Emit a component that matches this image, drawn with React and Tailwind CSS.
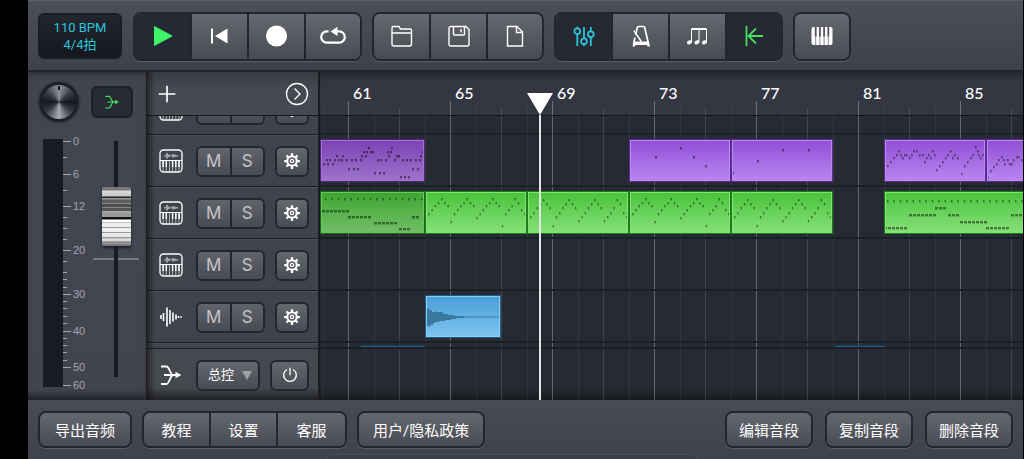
import { useState } from 'react'

const FIRST_BAR = 61
const FIRST_BAR_X = 28
const FOUR_BARS = 102

const barX = (bar) => Math.round(FIRST_BAR_X + ((bar - FIRST_BAR) * FOUR_BARS) / 4)

const bars = Array.from({ length: 28 }, (_, i) => 60 + i)
const labelledBars = [61, 65, 69, 73, 77, 81, 85]

// notes are [x, y, width] inside a clip
const row = (y, xs, w = 2) => xs.map((x) => [x, y, w])
const run = (y, from, to) => {
  const out = []
  for (let x = from; x < to - 1; x += 4) out.push([x, y, 3])
  return out
}
const steps = (ys) => ys.map((y, i) => [i * 3.2, y, 1.4])
const pulse = (y, count) => Array.from({ length: count }, (_, i) => [3 + i * 6.4, y, 1.4])
const shift = (notes, by) => notes.map(([x, y, w]) => [x + by, y, w])

const arpA = steps([38, 23, 19, 15, 12, 8, 12, 15, 31, 23, 19, 15, 12, 8, 12, 15, 27, 23, 19, 15, 12, 8, 12, 15, 35, 23, 19, 15, 8, 12, 19, 23])
const arpB = steps([38, 26, 22, 17, 13, 9, 13, 17, 35, 26, 22, 17, 13, 9, 13, 17, 30, 26, 22, 17, 13, 9, 13, 17, 30, 26, 22, 17, 9, 13, 22, 26])

const bassA = [
  ...pulse(8, 16),
  ...run(20, 0, 26),
  ...run(26, 26, 51),
  ...run(32, 52, 77),
  ...run(38, 77, 90),
  ...run(26, 90, 99),
  [101, 14, 1.4],
]
const bassB = [
  ...pulse(10, 22),
  ...run(37, 0, 25),
  ...run(24, 25, 51),
  ...run(17, 51, 63),
  ...run(24, 64, 76),
  ...run(31, 76, 102),
  ...run(37, 102, 127),
  ...run(24, 127, 140),
]
const melodyA = [
  ...row(21, [4, 7, 12, 16, 19, 24, 29, 33, 38, 55, 58, 63, 72, 80, 84, 88, 93, 97]),
  ...row(25, [1, 5, 10]),
  ...row(17, [14, 20, 39, 43, 66, 74, 76, 98]),
  ...row(13, [41, 44, 48, 50, 65, 68, 100]),
  ...row(9, [46, 69, 101]),
  ...row(30, [26, 31, 35, 90, 95]),
  ...row(34, [52, 57, 61]),
  ...row(38, [78, 82, 86]),
]
const dotsA = [[0, 35, 2], [26, 18, 2], [51, 9, 2], [64, 18, 2], [76, 27, 2]]
const dotsB = [[1, 34, 2], [26, 22, 2], [51, 11, 2], [77, 11, 2]]
const climb = [
  [0, 38], [3, 27], [6, 23], [9, 19], [12, 16], [14, 12], [16, 16], [18, 19], [20, 16], [22, 16], [25, 19],
  [27, 16], [29, 12], [32, 12], [35, 16], [38, 16], [40, 23], [42, 19], [44, 16], [46, 19], [48, 12], [50, 16],
  [52, 31], [55, 27], [58, 23], [61, 19], [63, 16], [66, 12], [68, 19], [70, 16], [73, 19], [77, 35], [80, 27],
  [83, 23], [86, 19], [88, 16], [91, 8], [93, 12], [94, 16], [96, 19], [98, 16], [100, 12],
].map(([x, y]) => [x, y, 1.6])
const climbLow = [
  [1, 39], [4, 32], [7, 28], [10, 25], [12, 21], [15, 18], [17, 21], [18, 25], [21, 21], [23, 25], [25, 25],
  [27, 21], [30, 18], [32, 18], [35, 21], [37, 25],
].map(([x, y]) => [x, y, 1.6])

const tracks = [
  {
    id: 'keys-1',
    icon: 'synth',
    color: 'purple',
    clips: [
      { from: 59.9, to: 64, notes: shift(melodyA, 2), dim: true },
      { from: 72, to: 76, notes: dotsA },
      { from: 76, to: 80, notes: dotsB },
      { from: 82, to: 86, notes: climb },
      { from: 86, to: 90, notes: climbLow },
    ],
  },
  {
    id: 'keys-2',
    icon: 'synth',
    color: 'green',
    clips: [
      { from: 59.9, to: 64, notes: shift(bassA, 2), dim: true },
      { from: 64, to: 68, notes: arpA },
      { from: 68, to: 72, notes: arpB },
      { from: 72, to: 76, notes: arpA },
      { from: 76, to: 80, notes: arpB },
      { from: 82, to: 90, notes: bassB },
    ],
  },
  { id: 'keys-3', icon: 'synth', color: 'green', clips: [] },
  { id: 'audio-1', icon: 'wave', color: 'blue', clips: [{ from: 64, to: 67, audio: true }] },
]

const clipColors = {
  purple: 'from-[#934fd6] to-[#b985ef] border-[#bb8aee] outline-[#5c2a92]',
  green: 'from-[#48c43a] to-[#84e076] border-[#7fe572] outline-[#1f7a1c]',
  blue: 'from-[#4a9fd8] to-[#7cc3f0] border-[#8accf5] outline-[#1d5c85]',
}

const Icon = ({ children, size = 24, className = '' }) => (
  <svg
    width={size}
    height={size}
    viewBox="0 0 24 24"
    fill="none"
    stroke="currentColor"
    strokeWidth="1.4"
    className={`shrink-0 overflow-visible ${className}`}
    aria-hidden="true"
  >
    {children}
  </svg>
)

const PlayIcon = () => (
  <Icon>
    <path d="M3.5 2.5 21 12 3.5 21.5z" fill="currentColor" strokeWidth="1" strokeLinejoin="round" />
  </Icon>
)

const RewindIcon = () => (
  <Icon>
    <path d="M4 4.5v15" strokeWidth="2" />
    <path d="M19.500 4.500v15L7 12z" fill="currentColor" stroke="none" />
  </Icon>
)

const RecordIcon = () => (
  <Icon>
    <circle cx="11.500" cy="12" r="10.500" fill="currentColor" stroke="none" />
  </Icon>
)

const LoopIcon = () => (
  <Icon>
    <path d="M7.5 7.4H5.8a5.6 5.6 0 0 0 0 11.2h12.4a5.6 5.6 0 0 0 0-11.2H14" strokeWidth="2.2" />
    <path d="M9.5 7.4 16.5 2.8v9.2z" fill="currentColor" stroke="none" />
  </Icon>
)

const FolderIcon = () => (
  <Icon>
    <path d="M2 20V4q0-1.500 1.500-1.500h5.500l1.500 2.500h9.500q1.500 0 1.500 1.500V20q0 2-2 2H4q-2 0-2-2zM2 9H22" />
  </Icon>
)

const SaveIcon = () => (
  <Icon>
    <path d="M4 2.500h15L22 5.500v14.500q0 2-2 2H4q-2 0-2-2V4.500q0-2 2-2z" />
    <path d="M6.500 2.500V10q0 1 1 1h9q1 0 1-1V2.500M14 5v3.500" />
  </Icon>
)

const PageIcon = () => (
  <Icon>
    <path d="M4.500 2.500H14L19.500 8v14h-15zM13.500 2.500V8.500h6" />
  </Icon>
)

const MixerIcon = () => (
  <Icon>
    <g strokeWidth="1.8">
      <path d="M5.300 2.800v1.600M5.300 10.200V22M12 3v11.400M12 20.200V22M18.800 3v4.400M18.800 13.200V22" />
      <circle cx="5.300" cy="7.300" r="2.900" />
      <circle cx="12" cy="17.300" r="2.900" />
      <circle cx="18.800" cy="10.300" r="2.900" />
    </g>
  </Icon>
)

const MetronomeIcon = () => (
  <Icon>
    <path d="M6.600 11 8.300 3.500q.3-1 1.200-1h5q.9 0 1.200 1L19.300 19M6 13.500 4.700 19" strokeWidth="1.700" />
    <path d="M4.800 6.500 12.300 17.500" strokeWidth="1.500" />
    <path d="M4.500 17.500H20l1 5h-2.500l-.4-1.500H6.400L6 22.500H3.500z" fill="currentColor" stroke="none" />
  </Icon>
)

const NotesIcon = () => (
  <Icon>
    <path d="M5.500 5H20.500" strokeWidth="2" />
    <path d="M5.500 5v13M13 5v13M20.500 5v13" strokeWidth="1" />
    <g fill="currentColor" stroke="none">
      <ellipse cx="3.500" cy="18.300" rx="2.600" ry="1.900" transform="rotate(-20 3.500 18.300)" />
      <ellipse cx="11" cy="18.300" rx="2.600" ry="1.900" transform="rotate(-20 11 18.300)" />
      <ellipse cx="18.500" cy="18.300" rx="2.600" ry="1.900" transform="rotate(-20 18.500 18.300)" />
    </g>
  </Icon>
)

const ReturnIcon = () => (
  <Icon>
    <path d="M4.500 2v20M21 12H7M14 4.500 6.500 12l7.500 7.500" strokeWidth="1.800" />
  </Icon>
)

const PianoIcon = () => (
  <Icon>
    <rect x="1.500" y="3" width="21" height="18" rx="2" fill="currentColor" stroke="none" />
    <g stroke="#54565e">
      <path d="M5.700 12v9M9.900 12v9M14.100 12v9M18.300 12v9" strokeWidth=".7" />
      <path d="M5.700 3v9.500M9.900 3v9.500M14.100 3v9.500M18.300 3v9.500" strokeWidth="1.800" />
    </g>
  </Icon>
)

const GearIcon = () => (
  <Icon size={18}>
    <circle cx="12" cy="12" r="6.300" strokeWidth="2.800" />
    <circle cx="12" cy="12" r="2.200" strokeWidth="1.600" />
    <path
      d="M12 1.500v4M12 18.500v4M1.500 12h4M18.500 12h4M4.600 4.600l2.800 2.800M16.600 16.600l2.800 2.800M4.600 19.400l2.800-2.800M16.600 7.400l2.800-2.800"
      strokeWidth="3"
    />
  </Icon>
)

const PowerIcon = () => (
  <Icon size={16}>
    <path d="M7.500 3.800a9.500 9.500 0 1 0 9 0M12 1v11.500" strokeWidth="2" />
  </Icon>
)

const BusIcon = ({ size = 24 }) => (
  <Icon size={size}>
    <path d="M2 3.500h5.500c3 0 3.500 8.500 7 8.500M2 21h5.500c3 0 3.500-9 7-9M5 12h12" strokeWidth="1.800" />
    <path d="M16.500 8.800 22.500 12l-6 3.200z" fill="currentColor" stroke="none" />
  </Icon>
)

const SynthIcon = () => (
  <Icon>
    <rect x="1" y="1" width="22" height="22" rx="3.500" strokeWidth="1.300" />
    <path d="M1 11.500h22" strokeWidth="1" />
    <path d="M6 6v1.500M8 4v5.500M10 5.500v2.500M12 6.200v1.200M14 5v3.500M16 5.500v2.500M18 6v1.500" strokeWidth="1" />
    <path d="M4.100 11.500v11M7.300 11.500v11M10.500 11.500v11M13.600 11.500v11M16.800 11.500v11M20 11.500v11" strokeWidth=".6" />
    <path d="M4.100 11.500v6.500M7.300 11.500v6.500M13.600 11.500v6.500M16.800 11.500v6.500M20 11.500v6.500" strokeWidth="1.500" />
  </Icon>
)

const WaveIcon = () => (
  <Icon>
    <path d="M2 10v4M4.500 8v8M8 2.500v19M11 5v14M14 7.500v9M17 9.500v5M19.500 11v2M22 11.300v1.400" strokeWidth="1.600" />
  </Icon>
)

const raised = 'bg-linear-to-b from-[#66686f] to-[#494b54] text-white'
const frame = 'flex overflow-hidden rounded-lg border-2 border-[#23262f] shadow-[0_1px_0_#5a5d66]'

const ToolGroup = ({ items, active = [], onToggle }) => (
  <div className={`${frame} divide-x-2 divide-[#23262f]`}>
    {items.map(({ id, label, Glyph, tone }) => {
      const on = active.includes(id)
      return (
        <button
          key={id}
          type="button"
          aria-label={label}
          aria-pressed={on}
          onClick={() => onToggle && onToggle(id)}
          className={`flex h-[45px] w-[57px] items-center justify-center last:w-[54px] ${on ? `bg-[#252a32] ${tone}` : raised}`}
        >
          <Glyph />
        </button>
      )
    })}
  </div>
)

const transport = [
  { id: 'play', label: '播放', Glyph: PlayIcon, tone: 'text-[#3ef468]' },
  { id: 'rewind', label: '回到开头', Glyph: RewindIcon, tone: 'text-white' },
  { id: 'record', label: '录音', Glyph: RecordIcon, tone: 'text-[#ff4b4b]' },
  { id: 'loop', label: '循环', Glyph: LoopIcon, tone: 'text-[#3ef468]' },
]
const files = [
  { id: 'open', label: '打开', Glyph: FolderIcon, tone: 'text-white' },
  { id: 'save', label: '保存', Glyph: SaveIcon, tone: 'text-white' },
  { id: 'new', label: '新建', Glyph: PageIcon, tone: 'text-white' },
]
const views = [
  { id: 'mixer', label: '混音器', Glyph: MixerIcon, tone: 'text-[#2fc3da]' },
  { id: 'metronome', label: '节拍器', Glyph: MetronomeIcon, tone: 'text-[#2fc3da]' },
  { id: 'notes', label: '音符', Glyph: NotesIcon, tone: 'text-[#2fc3da]' },
  { id: 'return', label: '自动返回', Glyph: ReturnIcon, tone: 'text-[#4ade62]' },
]
const keyboard = [{ id: 'piano', label: '键盘', Glyph: PianoIcon, tone: 'text-white' }]

const TopBar = () => {
  const [active, setActive] = useState(['play', 'mixer', 'return'])
  const toggle = (id) =>
    setActive((prev) => (prev.includes(id) ? prev.filter((x) => x !== id) : [...prev, id]))

  return (
    <header className="flex h-[72px] shrink-0 items-center border-t border-b-2 border-t-[#5b5f68] border-b-[#23252c] bg-linear-to-b from-[#4b4f58] to-[#3f414b] pt-px pl-[10px]">
      <button
        type="button"
        className="mr-[11px] h-[46px] w-[84px] rounded-md border-2 border-[#1b1d23] bg-linear-to-b from-[#22262e] to-[#15181e] text-[13px] leading-[17px] text-[#2cc4dc]"
      >
        110 BPM
        <br />
        4/4拍
      </button>
      <div className="flex gap-[10px]">
        <ToolGroup items={transport} active={active} onToggle={toggle} />
        <ToolGroup items={files} />
        <ToolGroup items={views} active={active} onToggle={toggle} />
        <ToolGroup items={keyboard} />
      </div>
    </header>
  )
}

const dbLabels = [[2, '0'], [35, '6'], [67, '12'], [111, '20'], [155, '30'], [192, '40'], [228, '50'], [246, '60']]
const dbTicks = [18, 51, 78, 89, 100, 122, 133, 140, 148, 162, 169, 177, 184, 199, 206, 213, 221]

const Mixer = () => {
  const [level, setLevel] = useState(74)

  return (
    <section className="w-[118px] shrink-0 bg-linear-to-b from-[#42454e] via-[#434650] to-[#42454f] px-[11px] shadow-[inset_0_-10px_8px_-6px_#1c1e24,inset_0_6px_6px_-5px_#24262c]">
      <div className="flex items-center justify-between pt-[10px] pr-[2px]">
        <button
          type="button"
          aria-label="声像"
          className="size-10 rounded-full border-3 border-[#1d2028] bg-[conic-gradient(#8e939e,#3a3e47_50deg,#15181e_90deg,#3a3e47_130deg,#a5aab4_180deg,#3a3e47_230deg,#15181e_270deg,#3a3e47_310deg,#8e939e)] shadow-[0_0_0_2px_#393c45]"
        >
          <span className="mx-auto block h-[4px] w-[2px] -translate-y-[14px] bg-[#15181e]" />
        </button>
        <button
          type="button"
          aria-label="输出"
          className="flex h-8 w-[42px] items-center justify-center rounded-md border-2 border-[#1c2027] bg-[#262b33] text-[#4ade62]"
        >
          <BusIcon size={16} />
        </button>
      </div>
      <div className="mt-[17px] flex pl-1">
        <div className="h-[248px] w-5 bg-[#171c24]" />
        <svg width="36" height="254" className="shrink-0 overflow-visible fill-[#a2a5ac] font-['Liberation_Sans',sans-serif] text-[11px]">
          {dbLabels.map(([y, text]) => (
            <g key={text}>
              <rect x="0" y={y} width="8" height="1" />
              <text x="10" y={y + 4}>{text}</text>
            </g>
          ))}
          {dbTicks.map((y) => (
            <rect key={y} x="0" y={y} width="4" height="1" />
          ))}
        </svg>
        <div className="relative h-[240px]">
          <span className="absolute top-[119px] -left-[6px] h-[2px] w-[46px] bg-[#777a82]" />
          <input
            type="range"
            aria-label="主音量"
            min="0"
            max="100"
            value={level}
            onChange={(e) => setLevel(Number(e.target.value))}
            className="relative mt-[2px] ml-[3px] block h-[236px] w-[29px] cursor-pointer appearance-none bg-[linear-gradient(90deg,transparent_12px,#171b22_12px_16px,transparent_16px)] [direction:rtl] [writing-mode:vertical-lr] [&::-webkit-slider-thumb]:h-[59px] [&::-webkit-slider-thumb]:w-[29px] [&::-webkit-slider-thumb]:appearance-none [&::-webkit-slider-thumb]:rounded-[2px] [&::-webkit-slider-thumb]:border-x-2 [&::-webkit-slider-thumb]:border-[#77797c] [&::-webkit-slider-thumb]:bg-[linear-gradient(#777_0_1px,#ddd_2px,#c4c4c4_7px,#222_8px_9px,#999_9px_10px,#5c5c5c_11px_14px,#888_14px_15px,#4e4e4e_15px_18px,#888_18px_19px,#555_19px_22px,#aaa_22px_23px,#999_24px_28px,#111_28px_30px,#fff_31px_33px,#bbb_33px_34px,#eee_34px_38px,#999_38px_39px,#eee_39px_43px,#999_43px_44px,#e8e8e8_44px_48px,#999_48px_49px,#e8e8e8_50px,#ccc_52px,#777_53px,#aaa_55px,#777_59px)] [&::-webkit-slider-thumb]:shadow-[0_2px_3px_#1c1e24]"
          />
        </div>
      </div>
    </section>
  )
}

const smallFrame = 'flex h-[31px] overflow-hidden rounded-md border-2 border-[#23262f]'
const letterButton = "flex-1 bg-linear-to-b from-[#62646c] to-[#494b54] font-['Inter',sans-serif] text-[17px] leading-none text-[#c3c4c7]"

const TrackRow = ({ icon, letters = true }) => (
  <div className="flex h-[52px] shrink-0 items-center border-t border-b border-t-[#4b4f58] border-b-[#1c1f26] pl-3 text-white">
    {icon === 'wave' ? <WaveIcon /> : <SynthIcon />}
    <div className={`${smallFrame} ml-[13px] w-[69px] divide-x-2 divide-[#23262f]`}>
      <button type="button" aria-label="静音" className={letterButton}>
        {letters && 'M'}
      </button>
      <button type="button" aria-label="独奏" className={letterButton}>
        {letters && 'S'}
      </button>
    </div>
    <button type="button" aria-label="轨道设置" className={`${smallFrame} ${raised} ml-[10px] w-[34px] items-center justify-center`}>
      <GearIcon />
    </button>
  </div>
)

const TrackList = () => (
  <section className="relative flex w-[174px] shrink-0 flex-col border-r-2 border-l border-[#1a1c22] bg-[#3f434b]">
    <div className="flex h-11 shrink-0 items-center justify-between border-b border-[#17191f] bg-linear-to-b from-[#3a3c43] to-[#464952] to-40% pr-[9px] pl-[10px] text-white">
      <button type="button" aria-label="添加轨道">
        <Icon size={20}>
          <path d="M12 2v20M2 12h20" strokeWidth="2" />
        </Icon>
      </button>
      <button type="button" aria-label="展开">
        <Icon>
          <circle cx="12" cy="12" r="10.500" strokeWidth="1.300" />
          <path d="m9.500 6.500 5.500 5.500-5.500 5.500" strokeWidth="1.300" />
        </Icon>
      </button>
    </div>
    <div className="flex h-[19px] shrink-0 flex-col justify-end overflow-hidden">
      <TrackRow icon="synth" letters={false} />
    </div>
    {tracks.map((t) => (
      <TrackRow key={t.id} icon={t.icon} />
    ))}
    <div className="h-[6px] shrink-0 border-t border-b border-t-[#4b4f58] border-b-[#1c1f26]" />
    <div className="flex flex-1 items-center bg-linear-to-b from-[#46484f] from-75% to-[#202228] pt-px pl-3 text-white">
      <BusIcon />
      <div className={`${smallFrame} ${raised} relative ml-[13px] w-[64px]`}>
        <select
          aria-label="总线"
          className="w-full appearance-none pl-[10px] text-[13px] text-white"
          defaultValue="master"
        >
          <option value="master">总控</option>
        </select>
        <svg width="10" height="9" viewBox="0 0 10 9" className="pointer-events-none absolute top-[9px] right-[6px] fill-[#a0a2a8]" aria-hidden="true">
          <path d="M0 0h10L5 9z" />
        </svg>
      </div>
      <button type="button" aria-label="开关" className={`${smallFrame} ${raised} ml-[10px] w-[39px] items-center justify-center`}>
        <PowerIcon />
      </button>
    </div>
    <span className="pointer-events-none absolute inset-y-0 left-0 w-2 bg-linear-to-r from-black/45 to-transparent" />
  </section>
)

const Clip = ({ clip, color }) => {
  const left = barX(clip.from)
  const width = barX(clip.to) - left
  return (
    <div
      className={`absolute top-[4px] h-[43px] overflow-hidden border-2 bg-linear-to-b outline-1 -outline-offset-1 ${clipColors[color]} ${clip.dim ? 'brightness-85' : ''}`}
      style={{ left, width }}
    >
      {clip.audio ? (
        <svg width="76" height="43" className="absolute -top-[2px] -left-[2px]" aria-hidden="true">
          <path
            d="M0 14h3v-1h1v2h3v2h4v-1h1v1h6v2h5v1h6v1h9v.5h36v1H40v.5h-9v1h-5v1h-6v1h-6v1h-4v1H8v2H5v2H4v-1H0z"
            fill="#39789f"
          />
        </svg>
      ) : (
        <svg width={width} height="43" className="absolute -top-[2px] -left-[2px] fill-black/45" aria-hidden="true">
          {clip.notes.map(([x, y, w], i) => (
            <rect key={i} x={x} y={y - 1} width={w} height="2.400" />
          ))}
        </svg>
      )}
    </div>
  )
}

const lineTone = (bar) => {
  if ((bar - FIRST_BAR) % 4 === 0) return 'bg-white/28'
  return (bar - FIRST_BAR) % 2 === 0 ? 'bg-white/12' : 'bg-white/6'
}

const Timeline = () => (
  <section className="relative flex min-w-0 flex-1 flex-col overflow-hidden bg-[#262b33]">
    <div className="relative h-11 shrink-0 border-b border-[#14161b] bg-[#343741] shadow-[inset_0_8px_7px_-5px_#22252c]">
      {labelledBars.map((bar) => (
        <span
          key={bar}
          className="absolute top-[10px] font-['Lato','Liberation_Sans',sans-serif] text-[16px] leading-[22px] font-medium text-white"
          style={{ left: barX(bar) + 5 }}
        >
          {bar}
        </span>
      ))}
      {bars.map((bar) => (
        <span
          key={bar}
          className={`absolute bottom-0 w-px ${lineTone(bar)} ${(bar - FIRST_BAR) % 4 === 0 ? 'h-[14px]' : 'h-[7px]'}`}
          style={{ left: barX(bar) }}
        />
      ))}
    </div>
    <div className="relative flex flex-1 flex-col shadow-[inset_0_-10px_8px_-5px_#16181c]">
      {bars.map((bar) => (
        <span key={bar} className={`absolute inset-y-0 w-px ${lineTone(bar)}`} style={{ left: barX(bar) }} />
      ))}
      <div className="h-[19px] shrink-0 border-b-2 border-[#1b1f26]" />
      {tracks.map((t) => (
        <div key={t.id} className="relative h-[52px] shrink-0 border-b-2 border-[#1b1f26]">
          {t.clips.map((clip) => (
            <Clip key={clip.from} clip={clip} color={t.color} />
          ))}
        </div>
      ))}
      <div className="relative h-[6px] shrink-0 border-b-2 border-[#1b1f26]">
        <span className="absolute top-[2px] h-[2px] border-b border-[#1f5f85] bg-[#1c3a4f]" style={{ left: barX(61.5), width: barX(64) - barX(61.5) }} />
        <span className="absolute top-[2px] h-[2px] border-b border-[#1f5f85] bg-[#1c3a4f]" style={{ left: barX(80.1), width: barX(82) - barX(80.1) }} />
      </div>
    </div>
    {/* playhead */}
    <div className="pointer-events-none absolute inset-y-0 flex w-[26px] flex-col items-center pt-[21px]" style={{ left: barX(68) }}>
      <svg width="26" height="22" viewBox="0 0 26 22" className="shrink-0 fill-white" aria-hidden="true">
        <path d="M0 0h26L13 22z" />
      </svg>
      <span className="w-[2px] flex-1 bg-[#e4e5e7]" />
    </div>
  </section>
)

const barButton = 'h-[33px] pt-[3px] text-[15px] whitespace-nowrap'

const BottomBar = () => (
  <footer className="relative flex h-[59px] shrink-0 items-center justify-between overflow-hidden bg-linear-to-b from-[#484b54] to-[#3f424b] px-[10px]">
    <div className="flex gap-[10px]">
      <div className={frame}>
        <button type="button" className={`${barButton} px-[15px] ${raised}`}>导出音频</button>
      </div>
      <div className={`${frame} divide-x-2 divide-[#23262f]`}>
        {['教程', '设置', '客服'].map((text) => (
          <button key={text} type="button" className={`${barButton} w-[67px] ${raised}`}>
            {text}
          </button>
        ))}
      </div>
      <div className={frame}>
        <button type="button" className={`${barButton} px-[14px] ${raised}`}>用户/隐私政策</button>
      </div>
    </div>
    <div className="flex gap-3">
      {['编辑音段', '复制音段', '删除音段'].map((text) => (
        <div key={text} className={frame}>
          <button type="button" className={`${barButton} px-3 ${raised}`}>{text}</button>
        </div>
      ))}
    </div>
    <span className="absolute -bottom-[4px] left-[299px] h-[9px] w-[370px] rounded-md border border-[#4d5059] bg-[#3b3e46]" />
  </footer>
)

const App = () => {
  return (
    <div className="min-h-screen bg-black pl-7 font-['Roboto','Noto_Sans_CJK_SC',sans-serif]">
      <div className="flex min-h-screen flex-col border-r border-black">
        <TopBar />
        <main className="flex flex-1">
          <Mixer />
          <TrackList />
          <Timeline />
        </main>
        <BottomBar />
      </div>
    </div>
  )
}

export default App
